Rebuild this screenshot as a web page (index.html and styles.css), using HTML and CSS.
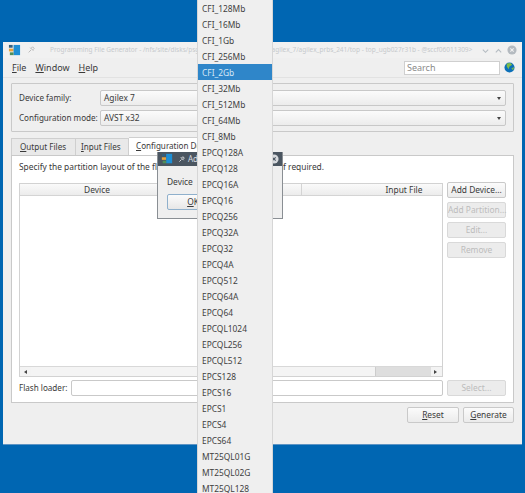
FILE: index.html
```html
<!DOCTYPE html>
<html lang="en">
<head>
<meta charset="utf-8">
<title>Programming File Generator</title>
<link rel="stylesheet" href="styles.css">
</head>
<body>
<div class="window">
  <div class="titlebar">
    <svg class="appicon" viewBox="0 0 14 14"><rect x="1" y="1" width="4" height="3" fill="#34607f"/><rect x="1" y="5" width="5" height="3" fill="#e8a33d"/><rect x="6" y="1" width="7" height="11" fill="#1e8fd5"/><rect x="2" y="9" width="4" height="3" fill="#4f8f5a"/></svg>
    <svg class="pin" viewBox="0 0 10 10"><path d="M2 8 L5 5 M4 2 L8 6 M5 3 L7 1 L9 3 L7 5" stroke="#b9b9b9" stroke-width="1.2" fill="none"/></svg>
    <div class="title">Programming File Generator - /nfs/site/disks/psg_user_work/proj/builds/agilex_7/agilex_prbs_241/top - top_ugb027r31b - @sccf06011309&gt;</div>
    <svg class="wbtn" viewBox="0 0 10 10"><path d="M2 4 L5 7 L8 4" stroke="#b5bcc2" stroke-width="1.2" fill="none"/></svg>
    <svg class="wbtn" viewBox="0 0 10 10"><path d="M2 7 L5 4 L8 7" stroke="#b5bcc2" stroke-width="1.2" fill="none"/></svg>
    <svg class="wclose" viewBox="0 0 12 12"><circle cx="6" cy="6" r="5.5" fill="#b4bac0"/><path d="M4 4 L8 8 M8 4 L4 8" stroke="#f0f0f0" stroke-width="1.3"/></svg>
  </div>
  <div class="menubar">
    <div class="menus"><span><u>F</u>ile</span><span><u>W</u>indow</span><span><u>H</u>elp</span></div>
    <div class="search">Search</div>
    <svg class="globe" viewBox="0 0 12 12"><circle cx="6" cy="6" r="5.5" fill="#0b6fb8"/><path d="M3 1.5 L7 1 L9 3 L6 5 L5 8 L3 5 Z M8 7 L11 5.5 L10 9 Z" fill="#7dbb4a"/></svg>
  </div>
  <div class="sep"></div>
  <div class="group">
    <div class="field"><label>Device family:</label><div class="combo">Agilex 7<i class="arrow"></i></div></div>
    <div class="field"><label>Configuration mode:</label><div class="combo">AVST x32<i class="arrow"></i></div></div>
  </div>
  <div class="tabs">
    <div class="tab t1"><u>O</u>utput Files</div>
    <div class="tab t2"><u>I</u>nput Files</div>
    <div class="tab t3 active"><u>C</u>onfiguration Device</div>
  </div>
  <div class="pane">
    <p class="hint">Specify the partition layout of the flash device and all its input files if required.</p>
    <div class="main">
      <div class="table">
        <div class="thead"><div class="th dev">Device</div><div class="th part">Partition</div><div class="th file">Input File</div></div>
        <div class="tbody"></div>
        <div class="hscroll"><i class="larrow"></i><div class="track"></div><div class="thumbend"></div><i class="rarrow"></i></div>
      </div>
      <div class="side">
        <div class="btn">Add Device...</div>
        <div class="btn off">Add Partition...</div>
        <div class="btn off">Edit...</div>
        <div class="btn off">Remove</div>
      </div>
    </div>
    <div class="flash">
      <label>Flash loader:</label>
      <div class="input"></div>
      <div class="btn off">Select...</div>
    </div>
  </div>
  <div class="actions">
    <div class="btn act1"><u>R</u>eset</div>
    <div class="btn act2"><u>G</u>enerate</div>
  </div>
</div>

<div class="dialog">
  <div class="dtitle">
    <svg class="appicon" viewBox="0 0 14 14"><rect x="1" y="1" width="4" height="3" fill="#34607f"/><rect x="1" y="5" width="5" height="3" fill="#e8a33d"/><rect x="6" y="1" width="7" height="11" fill="#1e8fd5"/><rect x="2" y="9" width="4" height="3" fill="#4f8f5a"/></svg>
    <svg class="pin" viewBox="0 0 10 10"><path d="M2 8 L5 5 M4 2 L8 6 M5 3 L7 1 L9 3 L7 5" stroke="#f2f2f2" stroke-width="1.2" fill="none"/></svg>
    <span class="dname">Add Device</span>
    <svg class="dclose" viewBox="0 0 12 12"><circle cx="6" cy="6" r="5.5" fill="#d7dade"/><path d="M4 4 L8 8 M8 4 L4 8" stroke="#4b5661" stroke-width="1.3"/></svg>
  </div>
  <div class="dbody">
    <div class="dlabel">Device</div>
    <div class="dbtn"><u>O</u>K</div>
  </div>
</div>

<div class="dropdown">
  <div class="item">CFI_128Mb</div>
  <div class="item">CFI_16Mb</div>
  <div class="item">CFI_1Gb</div>
  <div class="item">CFI_256Mb</div>
  <div class="item sel">CFI_2Gb</div>
  <div class="item">CFI_32Mb</div>
  <div class="item">CFI_512Mb</div>
  <div class="item">CFI_64Mb</div>
  <div class="item">CFI_8Mb</div>
  <div class="item">EPCQ128A</div>
  <div class="item">EPCQ128</div>
  <div class="item">EPCQ16A</div>
  <div class="item">EPCQ16</div>
  <div class="item">EPCQ256</div>
  <div class="item">EPCQ32A</div>
  <div class="item">EPCQ32</div>
  <div class="item">EPCQ4A</div>
  <div class="item">EPCQ512</div>
  <div class="item">EPCQ64A</div>
  <div class="item">EPCQ64</div>
  <div class="item">EPCQL1024</div>
  <div class="item">EPCQL256</div>
  <div class="item">EPCQL512</div>
  <div class="item">EPCS128</div>
  <div class="item">EPCS16</div>
  <div class="item">EPCS1</div>
  <div class="item">EPCS4</div>
  <div class="item">EPCS64</div>
  <div class="item">MT25QL01G</div>
  <div class="item">MT25QL02G</div>
  <div class="item">MT25QL128</div>
</div>
</body>
</html>
```
FILE: styles.css
```css
* { box-sizing: border-box; }
html, body { margin: 0; height: 100%; }
body {
  width: 525px; height: 493px; overflow: hidden; position: relative;
  background: #0066b2;
  font: 8.4px/12px "Noto Sans", sans-serif;
  color: #3a3a3a;
}
label { white-space: nowrap; font-size: 8.1px; }
u { text-underline-offset: 1px; text-decoration-thickness: 1px; }
.window {
  position: absolute; left: 3px; top: 42px; width: 519px; height: 403px;
  background: #efefef; display: flex; flex-direction: column;
  border-bottom: 1px solid #5d94c4;
}
.titlebar { height: 16px; display: flex; align-items: center; padding: 0 5px 0 5px; background: #f1f1f1; flex: none; }
.appicon { width: 13px; height: 13px; flex: none; }
.pin { width: 8px; height: 8px; flex: none; margin-left: 6px; }
.title { flex: 1; color: #c6c9cc; font-size: 6.5px; white-space: nowrap; overflow: hidden; padding-left: 15px; }
.wbtn { width: 9px; height: 9px; flex: none; margin-left: 4px; }
.wclose { width: 10px; height: 10px; flex: none; margin-left: 4px; }
.menubar { height: 19px; display: flex; align-items: center; padding: 0 7px 0 9px; flex: none; }
.menus { flex: 1; display: flex; gap: 9px; font-size: 9px; }
.search {
  width: 96px; height: 14px; background: #fff; border: 1px solid #cfcfcf;
  padding: 0 2px; line-height: 12px; color: #8a8a8a; font-size: 9px;
}
.globe { width: 11px; height: 11px; margin-left: 4px; flex: none; }
.sep { height: 1px; background: #e2e2e2; flex: none; }
.group {
  margin: 5px 8px 0; height: 49px; border: 1px solid #c9c9c9; border-radius: 1px;
  padding: 6px 7px 0 7px; display: flex; flex-direction: column; gap: 4px;
  flex: none;
}
.field { display: flex; align-items: center; height: 16px; }
.field label { width: 81px; flex: none; }
.combo {
  flex: 1; height: 16px; border: 1px solid #c8c8c8; border-radius: 2px;
  background: linear-gradient(#fbfbfb, #ececec); padding-left: 3px; line-height: 14px;
  position: relative;
}
.arrow {
  position: absolute; right: 4px; top: 6px; width: 0; height: 0;
  border: 2.5px solid transparent; border-top: 3px solid #444; border-bottom: 0;
}
.tabs { display: flex; margin: 5px 0 0 8px; height: 18px; flex: none; align-items: flex-end; }
.tab {
  height: 17px; padding-left: 8px; border: 1px solid #cfcfcf; border-bottom: 0;
  background: #e9e9e9; line-height: 16px; white-space: nowrap; flex: none; font-size: 8.1px;
}
.t1 { width: 65px; }
.t2 { width: 53px; padding-left: 5px; border-left: 0; }
.t3 { width: 118px; padding-left: 7px; }
.tab.active { background: #fff; height: 18px; border-left: 0; }
.pane {
  margin: 0 8px; height: 248px; background: #fff; border: 1px solid #c9c9c9;
  padding: 5px 6px 0 7px; display: flex; flex-direction: column; flex: none;
}
.hint { margin: 0; height: 22px; line-height: 12px; white-space: nowrap; }
.main { display: flex; gap: 4px; height: 194px; flex: none; }
.table { width: 424px; height: 194px; border: 1px solid #d2d2d2; display: flex; flex-direction: column; flex: none; }
.thead { display: flex; height: 12px; flex: none; }
.th {
  text-align: center; background: linear-gradient(#fafafa, #ececec);
  border-right: 1px solid #d4d4d4; border-bottom: 1px solid #d4d4d4; line-height: 11px;
}
.dev { width: 155px; }
.part { width: 127px; }
.file { flex: 1; border-right: 0; padding-left: 64px; }
.tbody { flex: 1; }
.hscroll { height: 10px; display: flex; align-items: center; border-top: 1px solid #d8d8d8; background: #f3f3f3; flex: none; }
.larrow { width: 0; height: 0; margin: 0 4px; border: 2px solid transparent; border-right: 3px solid #444; border-left: 0; }
.rarrow { width: 0; height: 0; margin: 0 5px 0 3px; border: 2px solid transparent; border-left: 3px solid #444; border-right: 0; }
.track { flex: 1; height: 9px; background: #f4f4f4; border-right: 1px solid #cccccc; }
.thumbend { width: 55px; height: 9px; background: #dedede; }
.side { display: flex; flex-direction: column; gap: 4px; width: 59px; flex: none; margin-top: -1px; }
.btn {
  height: 16px; width: 59px; border: 1px solid #c9c9c9; border-radius: 2px;
  background: linear-gradient(#fbfbfb, #ebebeb); text-align: center; line-height: 14px;
  white-space: nowrap; color: #3a3a3a; flex: none;
}
.btn.off { color: #bcbcbc; background: #ececec; border-color: #d9d9d9; }
.flash { display: flex; align-items: center; margin-top: 3px; gap: 4px; }
.flash label { flex: none; width: 48px; }
.input { width: 372px; height: 16px; background: #fff; border: 1px solid #c9c9c9; border-radius: 2px; flex: none; }
.actions { display: flex; justify-content: flex-end; gap: 4px; padding: 4px 8px 0 0; }
.btn.act1 { width: 52px; }
.btn.act2 { width: 51px; }
.dialog {
  position: absolute; left: 157px; top: 152px; width: 126px; height: 67px;
  background: #efefef; border: 1px solid #8a8f94; border-top: 0;
  display: flex; flex-direction: column;
}
.dtitle { height: 14px; background: #4b5661; display: flex; align-items: center; padding: 0 3px; color: #d9dce0; flex: none; }
.dtitle .appicon { width: 12px; height: 12px; }
.dtitle .pin { margin-left: 5px; width: 7px; height: 7px; }
.dname { margin-left: 3px; font-size: 8px; flex: 1; }
.dclose { width: 10px; height: 10px; }
.dbody { padding: 10px 9px 0; }
.dlabel { height: 18px; }
.dbtn {
  width: 52px; height: 16px; border: 1px solid #8fb0cc; border-radius: 2px;
  background: linear-gradient(#fbfbfb, #e7e7e7); text-align: center; line-height: 14px;
}
.dropdown {
  position: absolute; left: 197px; top: 0; width: 76px; height: 493px;
  background: #efefef; border-left: 1px solid #d6d6d6; border-right: 1px solid #d6d6d6;
  overflow: hidden;
}
.item { height: 16px; line-height: 18px; padding-left: 4px; white-space: nowrap; color: #3f3f3f; }
.item.sel { background: #2f86c9; color: #d6e8f6; margin: 0 -1px; padding-left: 5px; }
```
